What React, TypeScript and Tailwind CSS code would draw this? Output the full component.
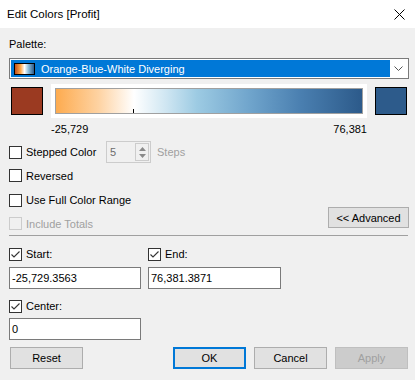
import { ReactNode } from "react";

const font = { fontFamily: "'Liberation Sans', Arial, sans-serif" };

function Check({ checked, disabled }: { checked?: boolean; disabled?: boolean }) {
  return (
    <span
      className={
        "flex h-[13px] w-[13px] shrink-0 items-center justify-center border " +
        (disabled ? "border-[#cccccc] bg-[#f0f0f0]" : "border-[#333333] bg-white")
      }
    >
      {checked && (
        <svg width="11" height="11" viewBox="0 0 11 11">
          <polyline points="1.5,5.5 4,8 9.5,2.5" fill="none" stroke="#333" strokeWidth="1.1" />
        </svg>
      )}
    </span>
  );
}

function CheckRow({
  label,
  checked,
  disabled,
  className = "",
}: {
  label: string;
  checked?: boolean;
  disabled?: boolean;
  className?: string;
}) {
  return (
    <div className={"flex items-center gap-[4px] " + className}>
      <Check checked={checked} disabled={disabled} />
      <span className={disabled ? "text-[#a0a0a0]" : "text-black"}>{label}</span>
    </div>
  );
}

function Field({ value, className = "" }: { value: string; className?: string }) {
  return (
    <div
      className={
        "flex h-[22px] items-center border border-[#7a7a7a] bg-white pl-[2px] " + className
      }
    >
      {value}
    </div>
  );
}

function Btn({ children, variant = "normal" }: { children: ReactNode; variant?: string }) {
  const cls =
    variant === "primary"
      ? "border-2 border-[#0078d7] bg-[#e1e1e1] text-black"
      : variant === "disabled"
        ? "border border-[#bfbfbf] bg-[#cccccc] text-[#a0a0a0]"
        : "border border-[#adadad] bg-[#e1e1e1] text-black";
  return (
    <div className={"flex h-[22px] w-[73px] items-center justify-center " + cls}>{children}</div>
  );
}

const gradient =
  "linear-gradient(to right, #fdab4f 0%, #fed3a3 14%, #ffffff 25.5%, #cfe6f2 36%, #9dcbe3 46%, #6ea3cb 64%, #4a7fb0 80%, #2c5a8a 100%)";

export default function App() {
  return (
    <div
      className="flex h-[380px] w-[415px] flex-col bg-[#f0f0f0] text-[11px] leading-[16px] text-black"
      style={font}
    >
      <div className="flex h-[28px] shrink-0 items-center justify-between bg-white pl-[7px] pr-[10px]">
        <span className="text-[11.5px]">Edit Colors [Profit]</span>
        <svg width="11" height="11" viewBox="0 0 11 11">
          <path d="M0.5 0.5 L10.5 10.5 M10.5 0.5 L0.5 10.5" stroke="#000" strokeWidth="1" />
        </svg>
      </div>

      <div className="flex flex-col pl-[9px] pr-[6px]">
        <div className="mt-[8px] h-[16px]">Palette:</div>

        <div className="mt-[6px] flex h-[21px] items-center border border-[#7a7a7a] bg-white p-[1px]">
          <div className="flex h-full flex-1 items-center bg-[#0078d7] pl-[3px] text-white">
            <span
              className="h-[12px] w-[21px] border border-black"
              style={{
                background:
                  "linear-gradient(to right, #c0501a, #fdab4f 30%, #ffffff 50%, #8fc0dc 70%, #2c5a8a)",
              }}
            />
            <span className="ml-[6px]">Orange-Blue-White Diverging</span>
          </div>
          <div className="flex w-[17px] items-center justify-center">
            <svg width="9" height="5" viewBox="0 0 9 5">
              <polyline points="0.5,0.5 4.5,4.5 8.5,0.5" fill="none" stroke="#555" strokeWidth="1" />
            </svg>
          </div>
        </div>

        <div className="mt-[5px] flex h-[34px] items-center">
          <div className="ml-[2px] h-[28px] w-[32px] border border-black bg-[#9b3a21]" />
          <div className="ml-[8px] flex h-[34px] w-[316px] bg-white p-[4px]">
            <div className="relative flex-1 border border-[#a0a0a0]" style={{ background: gradient }}>
              <div className="absolute bottom-0 left-[77px] h-[4px] w-[1px] bg-black" />
            </div>
          </div>
          <div className="ml-[8px] h-[28px] w-[32px] border border-black bg-[#2d5b8b]" />
        </div>

        <div className="mt-[3px] flex h-[16px] w-[358px] justify-between pl-[42px]">
          <span>-25,729</span>
          <span>76,381</span>
        </div>

        <div className="mt-[4px] flex h-[22px] items-center">
          <CheckRow label="Stepped Color" className="w-[97px]" />
          <div className="flex h-[22px] w-[45px] items-center border border-[#cccccc]">
            <span className="flex-1 pl-[3px] text-[#6d6d6d]">5</span>
            <div className="mr-[1px] flex h-[18px] w-[14px] flex-col items-center justify-center gap-[3px] border border-[#cccccc]">
              <svg width="7" height="4" viewBox="0 0 7 4">
                <polygon points="0,4 3.5,0 7,4" fill="#8a8a8a" />
              </svg>
              <svg width="7" height="4" viewBox="0 0 7 4">
                <polygon points="0,0 3.5,4 7,0" fill="#8a8a8a" />
              </svg>
            </div>
          </div>
          <span className="ml-[6px] text-[#a0a0a0]">Steps</span>
        </div>

        <CheckRow label="Reversed" className="h-[25px]" />
        <div className="flex justify-between">
          <div className="flex flex-col">
            <CheckRow label="Use Full Color Range" className="h-[24px]" />
            <CheckRow label="Include Totals" disabled className="h-[23px]" />
          </div>
          <div className="mb-[7px] flex h-[21px] w-[81px] items-center justify-center self-end border border-[#adadad] bg-[#e1e1e1]">
            &lt;&lt; Advanced
          </div>
        </div>

        <div className="mr-[1px] h-[1px] bg-[#a0a0a0]" />

        <div className="mt-[6px] flex h-[24px] items-center">
          <CheckRow label="Start:" checked className="w-[139px]" />
          <CheckRow label="End:" checked />
        </div>
        <div className="mt-[1px] flex gap-[7px]">
          <Field value="-25,729.3563" className="w-[132px]" />
          <Field value="76,381.3871" className="w-[133px]" />
        </div>

        <CheckRow label="Center:" checked className="mt-[5px] h-[24px]" />
        <Field value="0" className="w-[132px]" />

        <div className="mt-[7px] flex items-center pl-[1px]">
          <Btn>Reset</Btn>
          <div className="ml-auto flex gap-[8px]">
            <Btn variant="primary">OK</Btn>
            <Btn>Cancel</Btn>
            <div className="mr-[1px]">
              <Btn variant="disabled">Apply</Btn>
            </div>
          </div>
        </div>
      </div>
    </div>
  );
}
